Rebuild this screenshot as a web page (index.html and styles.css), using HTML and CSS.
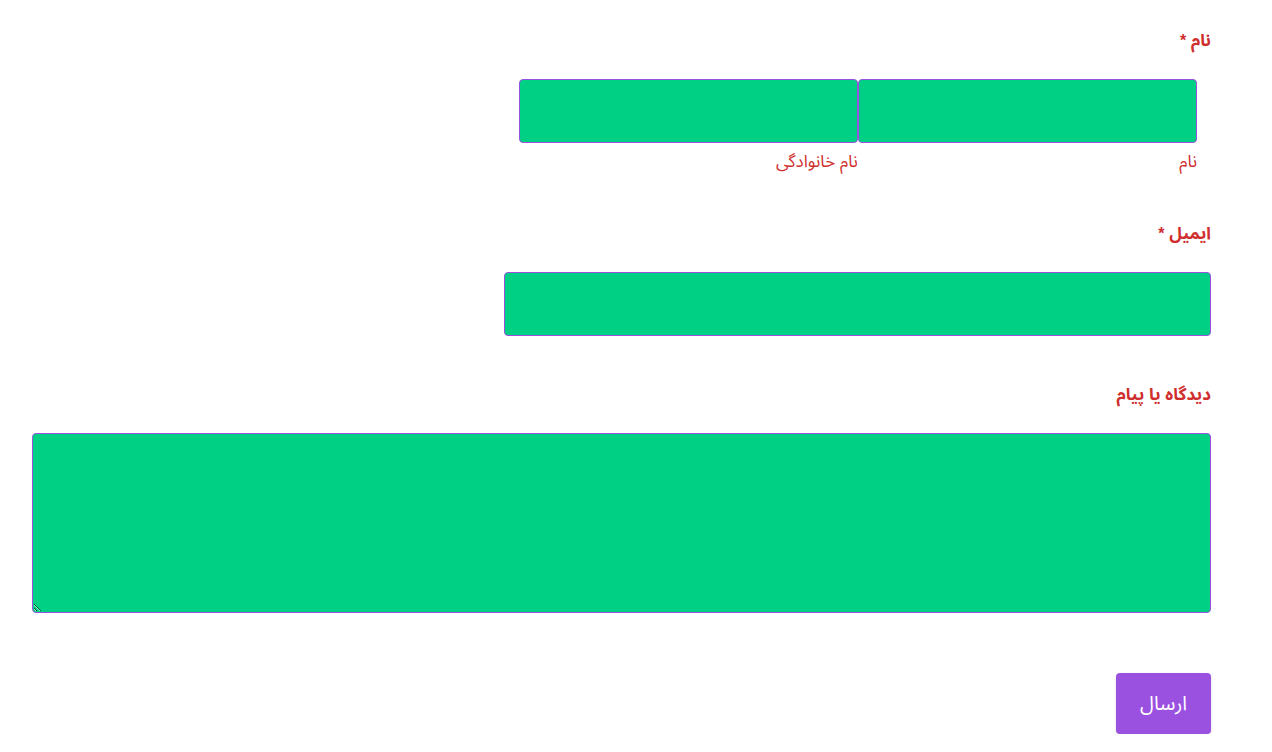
FILE: index.html
```html
<!DOCTYPE html>
<html lang="fa" dir="rtl">
<head>
<meta charset="utf-8">
<title>فرم تماس</title>
<link rel="stylesheet" href="styles.css">
</head>
<body>
<form class="form">
  <div class="field">
    <label class="label">نام <span class="req">*</span></label>
    <div class="name-wrap">
      <div class="name-col">
        <input class="input" type="text">
        <span class="sublabel">نام</span>
      </div>
      <div class="name-col">
        <input class="input" type="text">
        <span class="sublabel">نام خانوادگی</span>
      </div>
    </div>
  </div>
  <div class="field field-email">
    <label class="label">ایمیل <span class="req">*</span></label>
    <input class="input input-email" type="email">
  </div>
  <div class="field field-comment">
    <label class="label">دیدگاه یا پیام</label>
    <textarea class="textarea"></textarea>
  </div>
  <div class="actions">
    <button class="submit" type="button">ارسال</button>
  </div>
</form>
</body>
</html>
```
FILE: styles.css
```css
html, body {
  margin: 0;
  padding: 0;
  background: #ffffff;
}
body {
  font-family: "Liberation Sans", Arial, "Noto Sans Arabic", "DejaVu Sans", sans-serif;
}
.form {
  padding: 29px 61px 0 32px;
  display: flex;
  flex-direction: column;
}
.field {
  display: flex;
  flex-direction: column;
  align-items: flex-start;
}
.label {
  display: block;
  font-size: 17px;
  font-weight: bold;
  line-height: 24px;
  color: #cf2e2e;
  margin-bottom: 26px;
}
.req {
  font-size: 16px;
}
.name-wrap {
  width: 60%;
  box-sizing: border-box;
  padding: 0 14px 0 15px;
  display: flex;
}
.name-col {
  flex: 1 1 0;
  display: flex;
  flex-direction: column;
  align-items: flex-start;
}
.input {
  box-sizing: border-box;
  width: 100%;
  height: 64px;
  margin: 0;
  background: #00d084;
  border: 1px solid #9b51e0;
  border-radius: 4px;
  outline: none;
  font: inherit;
}
.sublabel {
  margin-top: 9px;
  font-size: 17px;
  line-height: 20px;
  color: #cf2e2e;
}
.field-email {
  margin-top: 50px;
}
.input-email {
  width: 60%;
}
.field-comment {
  margin-top: 47px;
}
.textarea {
  box-sizing: border-box;
  width: 100%;
  height: 180px;
  margin: 0;
  display: block;
  background: #00d084;
  border: 1px solid #9b51e0;
  border-radius: 4px;
  outline: none;
  font: inherit;
}
.actions {
  margin-top: 60px;
  display: flex;
}
.submit {
  height: 61px;
  padding: 0 24px;
  background: #9b51e0;
  color: #ffffff;
  border: none;
  border-radius: 4px;
  font-family: "Liberation Sans", Arial, "Noto Sans Arabic", "DejaVu Sans", sans-serif;
  font-size: 20px;
  box-shadow: 0 1px 3px rgba(0,0,0,0.15);
  cursor: pointer;
}
```
